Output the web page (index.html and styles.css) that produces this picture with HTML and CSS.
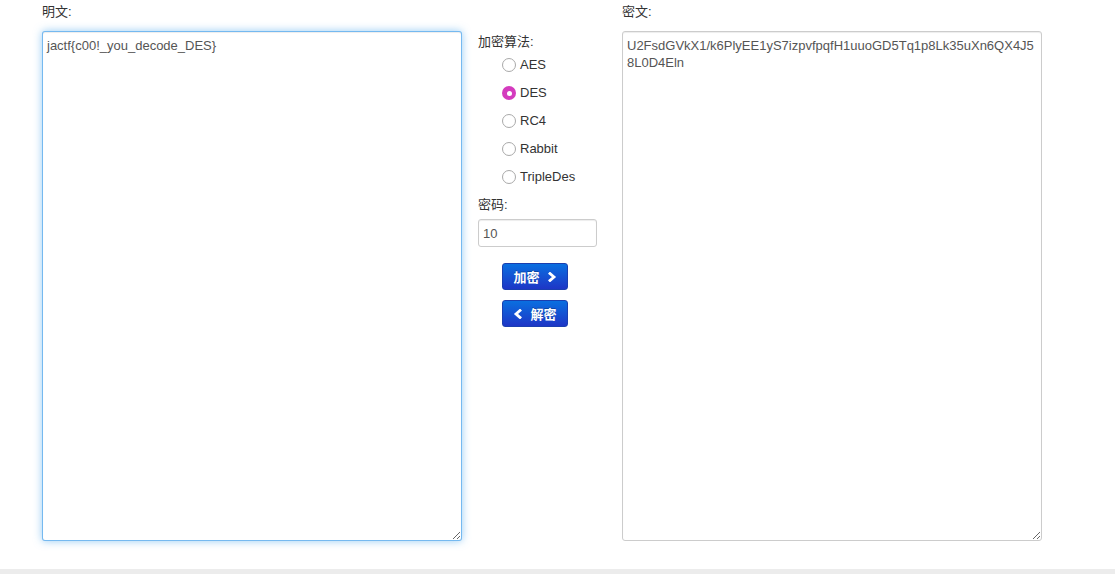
FILE: index.html
```html
<!DOCTYPE html>
<html lang="zh">
<head>
<meta charset="utf-8">
<title>DES</title>
<link rel="stylesheet" href="styles.css">
</head>
<body>
<div class="page">
  <div class="main">
    <div class="col col-text">
      <label class="lbl">明文:</label>
      <textarea class="box focus">jactf{c00!_you_decode_DES}</textarea>
    </div>
    <div class="col col-mid">
      <label class="lbl lbl-alg">加密算法:</label>
      <ul class="radios">
        <li class="radio"><span class="dot"></span>AES</li>
        <li class="radio"><span class="dot on"></span>DES</li>
        <li class="radio"><span class="dot"></span>RC4</li>
        <li class="radio"><span class="dot"></span>Rabbit</li>
        <li class="radio"><span class="dot"></span>TripleDes</li>
      </ul>
      <label class="lbl lbl-pwd">密码:</label>
      <input class="pwd" type="text" value="10">
      <div class="btns">
        <button class="btn">加密 <svg class="chev" viewBox="0 0 10 10" width="10" height="10"><polyline points="3,1.5 7,5 3,8.5" /></svg></button>
        <button class="btn"><svg class="chev" viewBox="0 0 10 10" width="10" height="10"><polyline points="7,1.5 3,5 7,8.5" /></svg> 解密</button>
      </div>
    </div>
    <div class="col col-text">
      <label class="lbl">密文:</label>
      <textarea class="box">U2FsdGVkX1/k6PlyEE1yS7izpvfpqfH1uuoGD5Tq1p8Lk35uXn6QX4J58L0D4Eln</textarea>
    </div>
  </div>
  <div class="footer"></div>
</div>
</body>
</html>
```

FILE: styles.css
```css
html, body {
  margin: 0;
  padding: 0;
  background: #fff;
}
body {
  font-family: "Helvetica Neue", "Liberation Sans", Arial, "Noto Sans CJK SC", sans-serif;
  font-size: 13px;
  line-height: 20px;
  color: #333;
}
.page {
  width: 1115px;
  height: 574px;
  display: flex;
  flex-direction: column;
}
.main {
  flex: 1;
  display: flex;
  padding-left: 42px;
}
.col-text {
  width: 420px;
  display: flex;
  flex-direction: column;
}
.col-mid {
  width: 144px;
  margin-left: 16px;
  display: flex;
  flex-direction: column;
}
.lbl {
  display: block;
  padding-top: 2px;
  height: 20px;
  margin-bottom: 9px;
  color: #333;
}
.box {
  box-sizing: border-box;
  width: 420px;
  height: 510px;
  margin: 0;
  padding: 5px 4px 4px;
  border: 1px solid #ccc;
  border-radius: 3px;
  font-family: "Helvetica Neue", "Liberation Sans", Arial, sans-serif;
  font-size: 13px;
  line-height: 17px;
  color: #555;
  background: #fff;
  box-shadow: inset 0 1px 1px rgba(0,0,0,0.075);
  outline: none;
}
.box.focus {
  border-color: rgba(82,168,236,0.8);
  box-shadow: inset 0 1px 1px rgba(0,0,0,0.075), 0 0 8px rgba(82,168,236,0.6);
}
.lbl-alg {
  padding-top: 32px;
  margin-bottom: -1px;
}
.radios {
  list-style: none;
  margin: 0;
  padding: 0 0 0 24px;
}
.radio {
  height: 28px;
  display: flex;
  align-items: center;
  color: #333;
}
.dot {
  box-sizing: border-box;
  width: 14px;
  height: 14px;
  border-radius: 50%;
  border: 1px solid #a9a9a9;
  background: #fff;
  margin-right: 4px;
  position: relative;
}
.dot.on {
  border: none;
  background: #d43bbe;
}
.dot.on::after {
  content: "";
  position: absolute;
  left: 4.5px;
  top: 4.5px;
  width: 5px;
  height: 5px;
  border-radius: 50%;
  background: #fff;
}
.lbl-pwd {
  padding-top: 4px;
  margin-bottom: 4px;
  margin-top: 0;
}
.pwd {
  box-sizing: border-box;
  width: 119px;
  height: 28px;
  margin: 0;
  padding: 4px 4px;
  border: 1px solid #ccc;
  border-radius: 3px;
  font-family: "Helvetica Neue", "Liberation Sans", Arial, sans-serif;
  font-size: 13px;
  color: #555;
  box-shadow: inset 0 1px 1px rgba(0,0,0,0.075);
  outline: none;
}
.btns {
  display: flex;
  flex-direction: column;
  gap: 10px;
  padding-left: 24px;
  margin-top: 16px;
}
.btn {
  box-sizing: border-box;
  width: 66px;
  height: 27px;
  padding: 0;
  border: 1px solid #1a3fb0;
  border-radius: 3px;
  background: linear-gradient(#0a6fe0, #1e36c6);
  color: #fff;
  font-family: "Helvetica Neue", "Liberation Sans", Arial, "Noto Sans CJK SC", sans-serif;
  font-size: 13px;
  font-weight: bold;
  display: flex;
  align-items: center;
  justify-content: center;
  gap: 7px;
  text-shadow: 0 -1px 0 rgba(0,0,0,0.25);
}
.chev polyline {
  fill: none;
  stroke: #fff;
  stroke-width: 2.8;
  stroke-linecap: square;
  stroke-linejoin: miter;
}
.footer {
  height: 5px;
  background: #ececec;
}
```
